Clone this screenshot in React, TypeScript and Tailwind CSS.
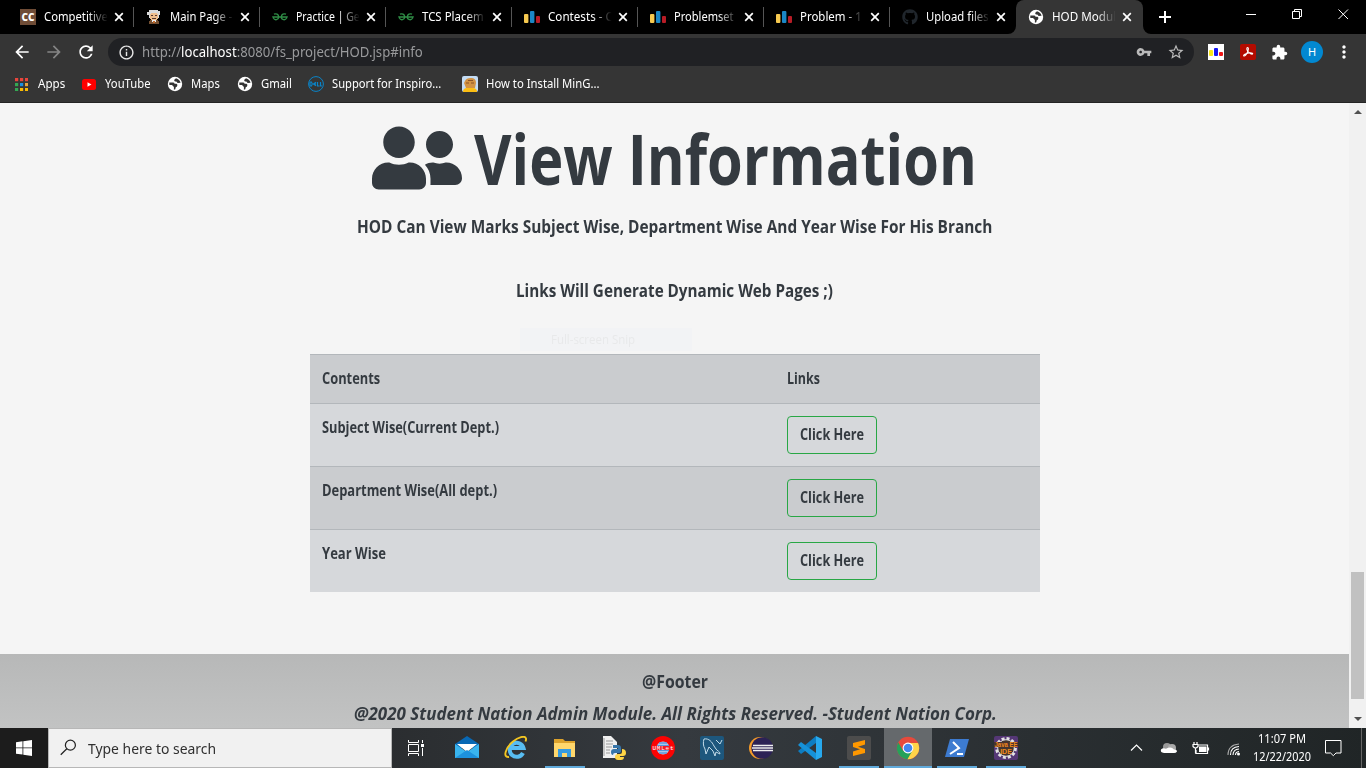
import { useLayoutEffect, useRef, type ReactNode } from "react";
import { FaGithub, FaUserFriends } from "react-icons/fa";
import { MdArrowBack, MdArrowForward, MdExtension, MdRefresh, MdVpnKey, MdStarOutline, MdInfoOutline, MdMoreVert } from "react-icons/md";

/* One line of text, condensed or widened to fill the width given by its class. */
function Fit({ className = "", children }: { className?: string; children: ReactNode }) {
  const box = useRef<HTMLSpanElement>(null);
  const text = useRef<HTMLSpanElement>(null);
  useLayoutEffect(() => {
    const fit = () => {
      if (box.current && text.current)
        text.current.style.transform = `scaleX(${box.current.clientWidth / text.current.offsetWidth})`;
    };
    fit();
    document.fonts?.ready.then(fit);
  }, []);
  return (
    <span ref={box} className={`block shrink-0 whitespace-nowrap ${className}`}>
      <span ref={text} className="inline-block origin-left">{children}</span>
    </span>
  );
}

function Globe() {
  return (
    <svg viewBox="0 0 16 16" className="size-4">
      <circle cx="8" cy="8" r="7.2" fill="#fff" />
      <path d="M2.300 6.600h3.700q1.500 0 1.500 1.200h2q1.200.6.8 2-.3 1.200-1.600 1.400l-.4 2-1.400.5V11L5 9H2.300zM9 2.200L7.300 3.800q-.5 1.600 1 1.700l1.500.2.700 1.200 3.100-.2q-.8-3.400-4.600-4.500z" fill="#353535" />
    </svg>
  );
}

function Bars() {
  return (
    <svg viewBox="0 0 16 16" className="size-4">
      <rect x="0" y="5" width="4.400" height="9" rx="1" fill="#f6c94f" />
      <rect x="6" y="2" width="4.400" height="12" rx="1" fill="#1a87c6" />
      <rect x="12" y="7" width="4" height="7" rx="1" fill="#b71c26" />
    </svg>
  );
}

function Geeks() {
  return (
    <svg viewBox="0 0 16 16" className="size-4" fill="none" stroke="#2f8d46" strokeWidth="1.300">
      <path d="M2 5.200c2-1 4.700 0 4.700 2.800 0 3-4 3.600-5.200 1.300L1 8h14l-.5 1.300c-1.200 2.300-5.200 1.700-5.200-1.300 0-2.800 2.700-3.800 4.700-2.800" />
    </svg>
  );
}

function Chef() {
  return (
    <span className="flex size-4 items-center justify-center bg-[#6f4c36] font-['Open_Sans',sans-serif] text-[10px] font-extrabold leading-none text-white">
      CC
    </span>
  );
}

function Einstein() {
  return (
    <svg viewBox="0 0 16 16" className="size-4" shapeRendering="crispEdges">
      <path d="M3 1h9v1h2v4h-1v3H3V6H1V3h2z" fill="#d8d8d8" />
      <path d="M5 4h6v1h1v5h-1v1H5v-1H4V5h1z" fill="#efbd8b" />
      <path d="M5 6h2v1H5zM9 6h2v1H9zM6 9h4v1H6z" fill="#54382e" />
      <path d="M4 11h8v1h1v3H3v-3h1z" fill="#745032" />
      <path d="M6 11h4v2H9v1H7v-1H6z" fill="#eee" />
      <path d="M7 12h2v2H7z" fill="#c46a2a" />
    </svg>
  );
}

function Close() {
  return (
    <svg viewBox="0 0 10 10" className="size-[10px]" stroke="#fff" strokeWidth="1.700">
      <path d="M1.200 1.200l7.600 7.600M8.800 1.200l-7.600 7.600" />
    </svg>
  );
}

const tabs = [
  { icon: <Chef />, title: "Competitive", w: "w-[64px]" },
  { icon: <Einstein />, title: "Main Page -", w: "w-[62px]" },
  { icon: <Geeks />, title: "Practice | Ge", w: "w-[64px]" },
  { icon: <Geeks />, title: "TCS Placem", w: "w-[62px]" },
  { icon: <Bars />, title: "Contests - C", w: "w-[65px]" },
  { icon: <Bars />, title: "Problemset", w: "w-[60px]" },
  { icon: <Bars />, title: "Problem - 1", w: "w-[62px]" },
  { icon: <FaGithub className="size-4 text-[#20262c]" />, title: "Upload files", w: "w-[63px]" },
];

function Tabs() {
  return (
    <div className="flex h-[34px] bg-black pl-2 text-[12px] leading-[34px] text-white">
      {tabs.map((t, i) => (
        <div key={i} className="flex w-[126px] shrink-0 items-center pl-3">
          {t.icon}
          <div className="ml-2 w-[65px] overflow-hidden [mask-image:linear-gradient(to_right,black_68%,transparent_98%)]">
            <Fit className={t.w}>{t.title}</Fit>
          </div>
          <div className="ml-[5px] flex w-[10px]"><Close /></div>
          {i < 7 && <div className="ml-[9px] h-5 w-px bg-[#555]" />}
        </div>
      ))}
      <div className="relative flex w-[127px] shrink-0 items-center rounded-t-lg bg-[#353535] pl-3">
        <svg viewBox="0 0 8 8" className="absolute -left-2 bottom-0 size-2"><path d="M8 0v8H0a8 8 0 0 0 8-8z" fill="#353535" /></svg>
        <svg viewBox="0 0 8 8" className="absolute -right-2 bottom-0 size-2"><path d="M0 0v8h8a8 8 0 0 1-8-8z" fill="#353535" /></svg>
        <Globe />
        <div className="ml-2 w-[65px] overflow-hidden [mask-image:linear-gradient(to_right,black_68%,transparent_98%)]">
          <Fit className="w-[64px]">HOD Modul</Fit>
        </div>
        <div className="ml-[5px]"><Close /></div>
      </div>
      <svg viewBox="0 0 12 12" className="ml-4 mt-[11px] size-3" stroke="#fff" strokeWidth="2"><path d="M6 0v12M0 6h12" /></svg>
      <svg viewBox="0 0 110 34" className="ml-[74px] h-[34px] w-[110px]" fill="none" stroke="#fff" strokeWidth="1">
        <path d="M1 14.500h10M47.500 11.500h7v7h-7zM49.500 11V9.500h7v7H55M93.500 9.500l9.500 9.500M103 9.500L93.500 19" />
      </svg>
    </div>
  );
}

function Toolbar() {
  return (
    <div className="flex h-9 items-center bg-[#353535] pl-3 text-white">
      <MdArrowBack className="size-5" />
      <MdArrowForward className="ml-3 size-5 text-[#858585]" />
      <MdRefresh className="ml-3 size-5" />
      <div className="ml-3 flex h-7 w-[1086px] shrink-0 items-center rounded-full bg-[#202124] pl-[10px] text-[14px] text-[#999a9c]">
        <MdInfoOutline className="size-[17px] text-[#e8e8e8]" />
        <Fit className="ml-[7px] w-[281px] leading-7">
          http://<span className="text-white">localhost</span>:8080/fs_project/HOD.jsp#info
        </Fit>
        <MdVpnKey className="ml-[713px] size-4 text-[#bababa]" />
        <MdStarOutline className="ml-[15px] size-[18px] text-[#bababa]" />
      </div>
      <svg viewBox="0 0 16 16" className="ml-[14px] size-4">
        <path d="M0 0h16v16H0z" fill="#fff" />
        <rect x="1" y="6" width="4" height="6" rx="1" fill="#f9e716" />
        <rect x="6" y="4" width="4" height="8" rx="1" fill="#1515f2" />
        <rect x="11" y="8" width="4" height="4" rx="1" fill="#f01818" />
      </svg>
      <svg viewBox="0 0 16 16" className="ml-4 size-4" fill="none">
        <rect width="16" height="16" rx="2" fill="#b30b00" />
        <path d="M7.500 3.500c1.300 0 1 2.500 0 4.500-.9 2-2.500 4.400-3.600 4-1.400-.8 2.400-2.700 5-3 3.600-.5 4.500.8 3.300 1.200-1.800.3-5.400-3.200-5.400-5.200 0-.9.200-1.500.7-1.500z" stroke="#fff" strokeWidth="1.100" />
      </svg>
      <MdExtension className="ml-[15px] size-[17px]" />
      <div className="ml-[13px] flex size-[22px] shrink-0 items-center justify-center rounded-full bg-[#0288d1] text-[11px]">H</div>
      <MdMoreVert className="ml-[11px] size-5 shrink-0" />
    </div>
  );
}

function Bookmarks() {
  const colors = ["#e8453c", "#e8453c", "#e8453c", "#34a853", "#1a8fe3", "#e8a33c", "#34a853", "#f9bb05", "#f9bb05"];
  return (
    <div className="flex h-[33px] items-center border-b border-[#242424] bg-[#353535] pb-[4px] text-[12px] leading-[28px] text-white">
      <svg viewBox="0 0 13 13" className="ml-[15px] size-[13px]">
        {colors.map((c, i) => <rect key={i} x={(i % 3) * 5} y={Math.floor(i / 3) * 5} width="3.200" height="3.200" fill={c} />)}
      </svg>
      <Fit className="ml-[10px] w-[27px]">Apps</Fit>
      <svg viewBox="0 0 14 11" className="ml-[17px] h-[11px] w-[14px]">
        <rect width="14" height="11" rx="2.500" fill="#f00" /><path d="M5.500 3.300v4.400l4-2.200z" fill="#fff" />
      </svg>
      <Fit className="ml-[9px] w-[46px]">YouTube</Fit>
      <div className="ml-4"><Globe /></div>
      <Fit className="ml-2 w-[29px]">Maps</Fit>
      <div className="ml-[17px]"><Globe /></div>
      <Fit className="ml-2 w-[31px]">Gmail</Fit>
      <svg viewBox="0 0 16 16" className="ml-4 size-4" fill="none" stroke="#0a84c8">
        <circle cx="8" cy="8" r="7.400" />
        <path d="M2 6v4h1.500q1.500-2 0-4zM8 6.200L5.500 8 8 9.800M6 8h2M9.500 6v4h2M12.500 6v4H14" strokeWidth="1.200" />
      </svg>
      <Fit className="ml-2 w-[109px]">Support for Inspiro...</Fit>
      <svg viewBox="0 0 16 16" className="ml-[21px] size-4">
        <rect width="16" height="16" rx="2" fill="#c4dcf4" />
        <path d="M3 5q1-3 6-3 5 0 5 5l-1 5H4l-2-5z" fill="#d29242" />
        <path d="M4 6.500h3v1H4zM9 6.500h3v1H9zM6 4h5v1H6z" fill="#8a5326" />
        <path d="M1 16q0-4 4-4h6q4 0 4 4z" fill="#fbbd12" />
      </svg>
      <Fit className="ml-2 w-[114px]">How to Install MinG...</Fit>
    </div>
  );
}

const rows = [
  { label: "Subject Wise(Current Dept.)", w: "w-[177px]", bg: "bg-[#d6d8db]" },
  { label: "Department Wise(All dept.)", w: "w-[175px]", bg: "bg-[#cacccf]" },
  { label: "Year Wise", w: "w-[64px]", bg: "bg-[#d6d8db]" },
];

function Page() {
  return (
    <main className="flex w-[1349px] flex-col items-center bg-[#f5f5f5] font-['Open_Sans',sans-serif] font-bold text-[#343a40]">
      <h1 className="mt-3 flex h-[86px] items-center">
        <FaUserFriends className="mt-[-1px] h-[72px] w-[90px]" />
        <Fit className="ml-3 w-[503px] text-[70px] leading-[86px]">View Information</Fit>
      </h1>
      <Fit className="mt-[9px] w-[635px] text-[18.5px] leading-8">
        HOD Can View Marks Subject Wise, Department Wise And Year Wise For His Branch
      </Fit>
      <Fit className="mt-8 w-[317px] text-[18.5px] leading-8">Links Will Generate Dynamic Web Pages ;)</Fit>
      <div className="ml-[-138px] mt-[22px] h-[23px] w-[172px] bg-[#f2f3f5] pl-[31px] text-[12px] font-normal leading-[23px] text-[#e8e9ea]">
        <Fit className="w-[84px]">Full-screen Snip</Fit>
      </div>
      <section className="ml-px mt-[3px] w-[730px] text-[15.5px] leading-6">
        <div className="flex h-[49px] border-t border-[#b3b7bb] bg-[#cacccf] pl-[11.500px] pt-[11px]">
          <div className="w-[465px]"><Fit className="w-[58px]">Contents</Fit></div>
          <Fit className="w-[33px]">Links</Fit>
        </div>
        {rows.map((r) => (
          <div key={r.label} className={`flex h-[63px] border-t border-[#b3b7bb] pl-[11.500px] pt-[11px] ${r.bg}`}>
            <div className="w-[465.500px]"><Fit className={r.w}>{r.label}</Fit></div>
            <button className="mt-px flex h-[38px] w-[90px] items-center justify-center rounded border border-[#28a745] pb-[2px]">
              <Fit className="w-[64px]">Click Here</Fit>
            </button>
          </div>
        ))}
      </section>
      <footer className="mt-[62px] flex h-[74px] w-full flex-col items-center bg-linear-to-b from-[#b7b8b8] to-[#c2c3c3] pt-[11px] text-[18.5px] leading-8">
        <Fit className="w-[66px]">@Footer</Fit>
        <Fit className="ml-px w-[643px] italic">
          @2020 Student Nation Admin Module. All Rights Reserved. -Student Nation Corp.
        </Fit>
      </footer>
    </main>
  );
}

function Scrollbar() {
  return (
    <div className="flex w-[17px] flex-col items-center bg-[#f1f1f1] py-[7px]">
      <svg viewBox="0 0 8 4" className="h-1 w-2" fill="#505050"><path d="M0 4l4-4 4 4z" /></svg>
      <div className="mt-[458px] h-[127px] w-[13px] bg-[#c1c1c1]" />
      <svg viewBox="0 0 8 4" className="mt-auto h-1 w-2" fill="#505050"><path d="M0 0l4 4 4-4z" /></svg>
    </div>
  );
}

const apps: { icon: ReactNode; open?: boolean; active?: boolean }[] = [
  { icon: <><path d="M0 8l12-8 12 8v4H0z" fill="#0868b4" /><path d="M2 8h20l-10 8z" fill="#fff" /><path d="M0 8l12 8L24 8v14H0z" fill="#39b4ee" /><path d="M0 22l12-8 12 8z" fill="#1d91dc" /></> },
  { icon: <g fill="none"><path d="M19 17A7 7 0 1 1 19.500 12H7" stroke="#58bdf2" strokeWidth="4" /><path d="M5 21C-2 22 2 11 9 5.500 14 1.500 21-1 22 2.500c.3 1-.1 2-.5 3" stroke="#f3c622" strokeWidth="1.900" /></g> },
  { open: true, icon: <><path d="M1 3h9l2 2h10v16H1z" fill="#dca22c" /><path d="M1 7h21v14H1z" fill="#ffd76c" /><path d="M5 21v-8h13v8h-4v-4H9v4z" fill="#369be0" /></> },
  { icon: <><path d="M1 0h8l6 6v16H1z" fill="#f0f0f0" /><path d="M2 2v18M4 5h7M4 8h7M4 11h6M4 14h4M4 17h4" stroke="#999" /><path d="M11 9h5q3 0 3 3v3q0 2-3 2h-3q-2 0-2 2-2 0-2-3 0-3 3-3h4v-1h-5z" fill="#3775a9" /><path d="M20 13q4 0 4 4 0 3-3 3h-3v1h4q0 3-3 3h-3q-3 0-3-3t3-3h2q2 0 2-2z" fill="#ffd545" /></> },
  { icon: <><circle cx="12" cy="12" r="12" fill="#fb0303" /><circle cx="12" cy="12" r="6.500" fill="#c5d7f1" /><path d="M6 9.500h12M6 14.500h12M8 7h8M8 17h8" stroke="#5794da" strokeWidth="1.500" /><path d="M1 10h22v4H1z" fill="#f41a25" /><text x="12" y="14" textAnchor="middle" fill="#fff" fontSize="6" fontFamily="Liberation Mono" textLength="21">UMLet</text></> },
  { icon: <><rect width="24" height="24" rx="2" fill="#1d577d" /><path d="M4 3c5-1 8 3 10 7l2 3c1 2 4 2 4 5l-4-2-1 4-2-5-4-4-3 7-1-5C3 10 3 6 4 3zM16 4l4 4 2-4" stroke="#c2dbe9" fill="none" /></> },
  { icon: <><circle cx="11" cy="12" r="11" fill="#f59b29" /><circle cx="13.200" cy="12" r="10.800" fill="#2c2255" /><path d="M4 9.500h20M3 12h21M4 14.500h20" stroke="#eee" strokeWidth="1.300" /></> },
  { icon: <><path d="M18 0l6 3v18l-6 3z" fill="#27a9ee" /><path d="M18 0v7L3 18l-3-3z" fill="#0d7dc2" /><path d="M18 24v-7L3 6 0 9z" fill="#1691d8" /></> },
  { open: true, icon: <><rect width="24" height="24" rx="2" fill="#4c4c4c" /><path d="M18 4v4.500l-7 2.200 7 2.200V17L6 20v-4.500l7-2.300-7-2.200V7z" fill="#ff9800" /></> },
  { open: true, active: true, icon: <><circle cx="12" cy="12" r="11.200" fill="#e64a3c" /><path d="M2.300 6.400A11.200 11.200 0 0 0 11.500 23.200L17 15H7.200z" fill="#25a15a" /><path d="M12 7h10A11.200 11.200 0 0 1 11.500 23.200L16.500 14.500z" fill="#ffd449" /><circle cx="12" cy="12" r="5.400" fill="#fff" /><circle cx="12" cy="12" r="4.300" fill="#4386ee" /></> },
  { open: true, icon: <><path d="M5 3h19l-5 18H0z" fill="#3d7bd0" /><path d="M8 6l6 6-9 6M12 18h6" stroke="#fff" strokeWidth="2" fill="none" /></> },
  { open: true, icon: <><rect width="24" height="24" rx="2" fill="#553776" /><circle cx="12" cy="12" r="9.500" fill="none" stroke="#e3e3e3" strokeWidth="2.800" strokeDasharray="3 2" /><circle cx="12" cy="12" r="8.300" fill="#45352f" stroke="#e3e3e3" /><path d="M0 6h24v5H0z" fill="#49322f" /><text x="12" y="11" textAnchor="middle" fontSize="7" fontWeight="bold" fontFamily="Liberation Sans" fill="#f28a1c" textLength="23" lengthAdjust="spacingAndGlyphs">Java EE</text><text x="12" y="17.500" textAnchor="middle" fontSize="7" fontWeight="bold" fontFamily="Liberation Sans" fill="#f28a1c">IDE</text></> },
];

function Taskbar() {
  return (
    <div className="flex h-10 bg-linear-to-r from-[#1d1d1d] via-[#353a3f] to-[#202526] text-white">
      <div className="flex w-12 items-center justify-center bg-[#1c1c1c]">
        <svg viewBox="0 0 16 16" className="size-4" fill="#fff"><path d="M0 2.200L6.500 1.300v6.200H0zM7.300 1.200L16 0v7.500H7.300zM0 8.300h6.500v6.300L0 13.800zM7.300 8.300H16V16l-8.700-1.300z" /></svg>
      </div>
      <div className="flex w-[344px] items-center border border-[#b7b7b7] bg-[#f1f1f1] pl-[11px] text-[15px] text-[#303030]">
        <svg viewBox="0 0 18 18" className="mb-px size-[17px]" fill="none" stroke="#222" strokeWidth="1.300"><circle cx="11" cy="6.500" r="5.300" /><path d="M7.200 10.300L.8 16.700" /></svg>
        <Fit className="ml-[11px] w-[128px] leading-9">Type here to search</Fit>
      </div>
      <div className="flex w-12 items-center justify-center">
        <svg viewBox="0 0 17 16" className="h-4 w-[17px]" fill="none" stroke="#fff"><path d="M.5 0v2.500h10V0M.5 4.500h10v7H.5zM.5 16v-2.500h10V16M14.500 0v3M14.500 8v8" /><path d="M13 4h3v3h-3z" fill="#fff" stroke="none" /></svg>
      </div>
      <div className="ml-[3px] flex gap-px">
        {apps.map((a, i) => (
          <div key={i} className={`flex h-10 w-12 flex-col items-center pt-2 ${a.active ? "bg-[#65696c]" : ""}`}>
            <svg viewBox="0 0 24 24" className="size-6">{a.icon}</svg>
            {a.open && <div className={`mt-auto h-[2px] bg-[#60aadb] ${a.active ? "w-12" : "w-10"}`} />}
          </div>
        ))}
      </div>
      <svg viewBox="0 0 115 40" className="ml-[100px] h-10 w-[115px]" fill="none" stroke="#fff" strokeWidth="1.200">
        <path d="M1 22.500l5.500-5.500 5.500 5.500" />
        <circle cx="37" cy="19" r="4" fill="#999" stroke="none" /><circle cx="42" cy="20" r="4" fill="#aaa" stroke="none" />
        <path d="M34 25q-4-.5-3-3.500 2-2 5-.7 5-3 8 .7 3-.3 3 2-1 1.500-3 1.500z" fill="#fff" stroke="none" />
        <path d="M68.500 17h9v8.500H66V22M78.500 19.500v3" /><path d="M69 18.500h7.500V24H69z" fill="#fff" stroke="none" />
        <path d="M64 14v2.500M67 14v2.500M63 16.500h5v2q-2.500 3-5 0zM65.500 20v5.500" />
        <g strokeWidth="1.100"><path d="M98 27q0-10 11-11" stroke="#aaa" /><path d="M100.500 27q0-8 8.500-8.500M103 27q0-5.500 6-6M105.500 27q0-3 3.500-3.500" /></g>
        <circle cx="108.500" cy="26" r="1.500" fill="#fff" stroke="none" />
      </svg>
      <div className="ml-[2px] flex w-[70px] flex-col items-center pt-[2px] text-[12px] leading-[18px]">
        <Fit className="w-[48px]">11:07 PM</Fit>
        <Fit className="w-[58px]">12/22/2020</Fit>
      </div>
      <svg viewBox="0 0 17 17" className="ml-[8px] mt-3 size-[17px]" fill="none" stroke="#fff"><path d="M.5.500h15.500v12.500h-5l-2.700 2.700-2.700-2.700H.5z" /></svg>
      <div className="ml-auto mr-1 w-px bg-[#666]" />
    </div>
  );
}

export default function App() {
  return (
    <div className="flex h-[768px] w-[1366px] flex-col overflow-hidden font-['Noto_Sans','Open_Sans',sans-serif]">
      <Tabs />
      <Toolbar />
      <Bookmarks />
      <div className="flex h-[625px] shrink-0">
        <Page />
        <Scrollbar />
      </div>
      <Taskbar />
    </div>
  );
}
